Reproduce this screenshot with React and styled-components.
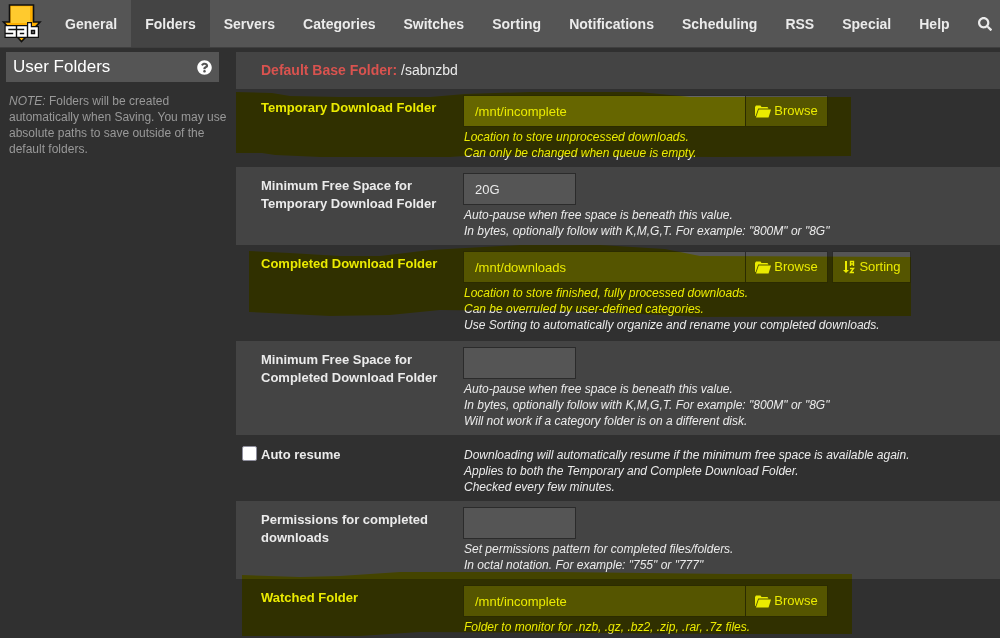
import React from 'react';
import styled, { createGlobalStyle } from 'styled-components';
import { FaSearch, FaQuestionCircle } from 'react-icons/fa';

const GlobalStyle = createGlobalStyle`
    * { box-sizing: border-box; }
    html { background: #303030; }
    body {
        margin: 0;
        background: #303030;
        color: #ebebeb;
        font: 13px/18px "Liberation Sans", Arial, sans-serif;
    }
`

const Page = styled.div`
    position: relative;
    min-height: 100vh;
    isolation: isolate;
    overflow: hidden;
    background: #303030;
`

const Navbar = styled.nav`
    display: flex;
    height: 48px;
    background: #555;
    border-bottom: 1px solid #3f3f3f;
`

const Brand = styled.a`
    flex: none;
    width: 51px;
    svg { display: block; }
`

const NavLink = styled.a`
    display: flex;
    align-items: center;
    padding: 0 14px;
    color: #ebebeb;
    font-size: 14px;
    font-weight: bold;
    text-decoration: none;
    background: ${props => props.$active ? '#444' : 'transparent'};
`

const Content = styled.div`
    display: grid;
    grid-template-columns: 230px minmax(0, 1fr);
    padding: 4px 0 0 6px;
`

const Heading = styled.h1`
    display: flex;
    align-items: center;
    justify-content: space-between;
    height: 30px;
    margin: 0 17px 11px 0;
    padding: 0 7px;
    background: #555;
    font-size: 17px;
    font-weight: normal;
    color: #fff;
`

const HelpLink = styled.a`
    display: flex;
    color: #fff;
    font-size: 15px;
`

const Note = styled.p`
    margin: 0;
    padding-left: 3px;
    color: #999;
    font-size: 12px;
    line-height: 16px;
`

const Row = styled.div`
    display: grid;
    grid-template-columns: 202px minmax(0, 1fr);
    padding: 6px 0 ${props => props.$tall ? '8px' : '6px'} 25px;
    background: ${props => props.$shaded ? '#444' : 'transparent'};
`

const BaseFolder = styled.div`
    padding: 9px 25px 10px;
    background: #444;
    font-size: 14px;
    strong { color: #d9534f; }
`

const Label = styled.label`
    padding: ${props => props.$check ? '5px' : '4px'} 20px 0 0;
    font-weight: bold;
`

const CheckLabel = styled(Label)`
    display: flex;
    align-items: flex-start;
    gap: 4px;
    margin-left: -19px;
    input {
        appearance: none;
        width: 15px;
        height: 15px;
        margin: 0;
        background: #fff;
        border: 1px solid #8f8f9d;
        border-radius: 2px;
    }
`

const Controls = styled.div`
    display: flex;
`

const TextInput = styled.input`
    width: ${props => props.$wide ? '283px' : '113px'};
    height: 32px;
    padding: 0 11px;
    background: ${props => props.$focused ? '#666' : '#555'};
    border: 1px solid #2b2b2b;
    color: #ebebeb;
    font: inherit;
    outline: none;
`

const Button = styled.button`
    display: flex;
    align-items: center;
    justify-content: center;
    gap: 3px;
    width: ${props => props.$detached ? '79px' : '83px'};
    height: 32px;
    margin-left: ${props => props.$detached ? '4px' : '-1px'};
    padding: 0;
    background: #555;
    border: 1px solid #2b2b2b;
    color: #ebebeb;
    font: inherit;
    svg { flex: none; }
`

const Hint = styled.div`
    padding: ${props => props.$alone ? '6px' : '2px'} 0 0 1px;
    font-size: 12px;
    font-style: italic;
    line-height: 16px;
`

const Marker = styled.svg`
    position: absolute;
    top: 0;
    left: 0;
    width: 1000px;
    height: 638px;
    mix-blend-mode: multiply;
    pointer-events: none;
    fill: #ff0;
`

const tabs = ['General', 'Folders', 'Servers', 'Categories', 'Switches', 'Sorting', 'Notifications', 'Scheduling', 'RSS', 'Special', 'Help'];

const folders = [
    {
        id: 'download_dir',
        label: 'Temporary Download Folder',
        value: '/mnt/incomplete',
        browse: true,
        focused: true,
        hints: ['Location to store unprocessed downloads.', 'Can only be changed when queue is empty.'],
    },
    {
        id: 'download_free',
        label: 'Minimum Free Space for Temporary Download Folder',
        value: '20G',
        hints: ['Auto-pause when free space is beneath this value.', 'In bytes, optionally follow with K,M,G,T. For example: "800M" or "8G"'],
    },
    {
        id: 'complete_dir',
        label: 'Completed Download Folder',
        value: '/mnt/downloads',
        browse: true,
        sorting: true,
        hints: ['Location to store finished, fully processed downloads.', 'Can be overruled by user-defined categories.', 'Use Sorting to automatically organize and rename your completed downloads.'],
    },
    {
        id: 'complete_free',
        label: 'Minimum Free Space for Completed Download Folder',
        value: '',
        hints: ['Auto-pause when free space is beneath this value.', 'In bytes, optionally follow with K,M,G,T. For example: "800M" or "8G"', 'Will not work if a category folder is on a different disk.'],
    },
    {
        id: 'fulldisk_autoresume',
        label: 'Auto resume',
        checkbox: true,
        hints: ['Downloading will automatically resume if the minimum free space is available again.', 'Applies to both the Temporary and Complete Download Folder.', 'Checked every few minutes.'],
    },
    {
        id: 'permissions',
        label: 'Permissions for completed downloads',
        value: '',
        hints: ['Set permissions pattern for completed files/folders.', 'In octal notation. For example: "755" or "777"'],
    },
    {
        id: 'dirscan_dir',
        label: 'Watched Folder',
        value: '/mnt/incomplete',
        browse: true,
        hints: ['Folder to monitor for .nzb, .gz, .bz2, .zip, .rar, .7z files.'],
    },
];

const Logo = () => (
    <svg width="44" height="46" viewBox="0 0 44 46" aria-hidden="true">
        <path d="M9.500 5H33.500V22H40L21.500 41.500L3.500 22H9.500Z" fill="#ffb000" stroke="#111" strokeWidth="1.600" />
        <path d="M11 6.500H30V23H11Z" fill="#ffca2e" />
        <g fill="none" strokeLinecap="square">
            <path d="M14.500 27.500H7V31.500H14.500V35.500H7M18.500 27.500H25.500V35.500H18.500V31.500H25.500M29.500 24.500V35.500H36.500V28.500H29.500" stroke="#111" strokeWidth="5" />
            <path d="M14.500 27.500H7V31.500H14.500V35.500H7M18.500 27.500H25.500V35.500H18.500V31.500H25.500M29.500 24.500V35.500H36.500V28.500H29.500" stroke="#fff" strokeWidth="2.600" />
        </g>
    </svg>
)

const FolderIcon = () => (
    <svg width="16" height="13" viewBox="0 0 16 13" fill="currentColor" aria-hidden="true">
        <path d="M0 11V2L1 0.500H5.500L6.500 2H12.500L13.500 3.500H3.200L0.600 11Z" />
        <path d="M3.800 4.500H16L13.500 12.500H1Z" />
    </svg>
)

const SortIcon = () => (
    <svg width="14" height="14" viewBox="0 0 14 14" aria-hidden="true">
        <path d="M3 1H5V10H7L4 13L1 10H3Z" fill="currentColor" />
        <path d="M8.500 6V1.500H11.500V6M8.500 4H11.500M8 8.500H11.500L8.500 12.500H12" fill="none" stroke="currentColor" strokeWidth="1.400" />
    </svg>
)

const FolderRow = ({item, shaded}) => (
    <Row $shaded={shaded} $tall={item.sorting}>
        {
            item.checkbox
                ? <CheckLabel $check htmlFor={item.id}><input type="checkbox" id={item.id} />{item.label}</CheckLabel>
                : <Label htmlFor={item.id}>{item.label}</Label>
        }
        <div>
            {!item.checkbox && (
                <Controls>
                    <TextInput id={item.id} type="text" defaultValue={item.value} $wide={item.browse} $focused={item.focused} />
                    {item.browse && <Button type="button"><FolderIcon />Browse</Button>}
                    {item.sorting && <Button type="button" $detached><SortIcon />Sorting</Button>}
                </Controls>
            )}
            <Hint $alone={item.checkbox}>
                {item.hints.map(hint => <div key={hint}>{hint}</div>)}
            </Hint>
        </div>
    </Row>
)

const App = () => (
    <Page>
        <GlobalStyle />
        <Navbar>
            <Brand href="#" aria-label="SABnzbd"><Logo /></Brand>
            {tabs.map(tab => <NavLink key={tab} href="#" $active={tab === 'Folders'}>{tab}</NavLink>)}
            <NavLink href="#" aria-label="Search"><FaSearch size={14} /></NavLink>
        </Navbar>
        <Content>
            <aside>
                <Heading>User Folders<HelpLink href="#" aria-label="Help"><FaQuestionCircle /></HelpLink></Heading>
                <Note><em>NOTE:</em> Folders will be created automatically when Saving. You may use absolute paths to save outside of the default folders.</Note>
            </aside>
            <main>
                <BaseFolder><strong>Default Base Folder:</strong> /sabnzbd</BaseFolder>
                {folders.map((item, index) => <FolderRow key={item.id} item={item} shaded={index % 2 === 1} />)}
            </main>
        </Content>
        {/* highlighter strokes over the folders that have to be set */}
        <Marker aria-hidden="true">
            <path d="M236 92L272 93L290 96L340 97L430 97L465 94L530 92H640L690 97L851 97V156L720 157L465 156L450 157H320L275 155L262 153H236Z" />
            <path d="M249 251L290 253L340 256H380L430 250L520 245H600L665 249L700 256L911 257V316L700 317L600 312L440 310L390 315L330 316L249 312Z" />
            <path d="M242 575L300 577L340 576L400 572H560L730 574L852 574V634L740 634L420 632L360 636H242Z" />
        </Marker>
    </Page>
)

export default App;
